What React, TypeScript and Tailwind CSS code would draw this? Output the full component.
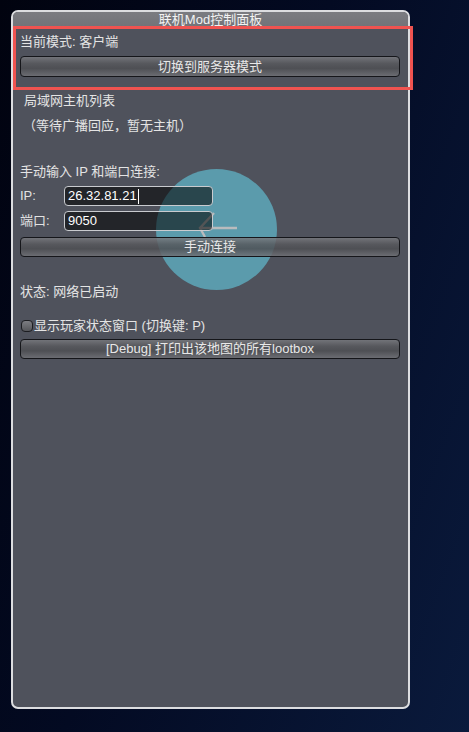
const font = { fontFamily: '"Liberation Sans", "Noto Sans CJK SC", sans-serif' };

const GameButton = ({ label, className = "" }: { label: string; className?: string }) => (
  <div
    className={`flex h-[21px] items-center justify-center rounded-[4px] border border-[#15161a] bg-[linear-gradient(to_bottom,rgba(120,121,126,0.85)_0%,rgba(88,89,93,0.85)_35%,rgba(78,79,83,0.85)_60%,rgba(112,113,118,0.85)_100%)] text-[13px] text-[#e8e8e8] ${className}`}
  >
    {label}
  </div>
);

const Field = ({ label, value, caret }: { label: string; value: string; caret?: boolean }) => (
  <div className="flex h-[20px] items-center">
    <span className="w-[44px] text-[13px] text-[#e2e2e2]">{label}</span>
    <div className="flex h-[20px] w-[149px] items-center rounded-[4px] border border-[#c9cbcf] bg-black/55 pl-[3px] text-[13px] text-white">
      {value}
      {caret && <span className="ml-[1px] inline-block h-[15px] w-[1px] bg-white" />}
    </div>
  </div>
);

export default function App() {
  return (
    <div
      className="relative h-[732px] w-[469px] overflow-hidden bg-[linear-gradient(110deg,#01030f_0%,#030a22_45%,#0a1a3c_100%)]"
      style={font}
    >
      <div className="absolute left-[11px] top-[10px] h-[699px] w-[399px] overflow-hidden rounded-[7px] border-2 border-[#dcdde0] bg-[#4f525c]">
        <div className="flex h-[16px] items-center justify-center bg-[linear-gradient(to_bottom,#7b7c81,#717277)] text-[13px] text-[#f2f2f2]">
          联机Mod控制面板
        </div>

        {/* busy indicator behind the controls */}
        <div className="absolute left-[143px] top-[157px] h-[121px] w-[121px] rounded-full bg-[#5b9bac]" />
        <svg className="absolute left-[170px] top-[195px]" width="60" height="40" viewBox="0 0 60 40">
          <path d="M31 6 L17 21 L22 30 M17 21 L54 21" fill="none" stroke="#b9bbbd" strokeWidth="2.4" />
        </svg>

        <div className="relative flex flex-col px-[7px] pr-[8px]">
          <div className="mt-[4px] h-[20px] text-[13px] leading-[20px] text-[#e4e4e4]">当前模式: 客户端</div>
          <GameButton label="切换到服务器模式" className="mt-[4px]" />
          <div className="mt-[14px] h-[20px] pl-[4px] text-[13px] leading-[20px] text-[#e4e4e4]">局域网主机列表</div>
          <div className="mt-[5px] h-[20px] pl-[3px] text-[13px] leading-[20px] text-[#e4e4e4]">（等待广播回应，暂无主机）</div>
          <div className="mt-[26px] h-[20px] text-[13px] leading-[20px] text-[#e4e4e4]">手动输入 IP 和端口连接:</div>
          <div className="mt-[4px]">
            <Field label="IP:" value="26.32.81.21" caret />
          </div>
          <div className="mt-[5px]">
            <Field label="端口:" value="9050" />
          </div>
          <GameButton label="手动连接" className="mt-[6px] !h-[20px]" />
          <div className="mt-[25px] h-[20px] text-[13px] leading-[20px] text-[#e4e4e4]">状态: 网络已启动</div>
          <div className="mt-[14px] flex h-[20px] items-center text-[13px] text-[#e4e4e4]">
            <span className="ml-[1px] mr-[1px] inline-block h-[12px] w-[12px] rounded-[4px] border border-[#1c1d21] bg-[linear-gradient(to_bottom,#7c7d82,#55565a)]" />
            显示玩家状态窗口 (切换键: P)
          </div>
          <GameButton label="[Debug] 打印出该地图的所有lootbox" className="mt-[3px] !h-[20px]" />
        </div>
      </div>

      {/* highlight annotation */}
      <div className="absolute left-[13px] top-[26px] h-[64px] w-[400px] border-[3px] border-[#ef5350]" />
    </div>
  );
}
